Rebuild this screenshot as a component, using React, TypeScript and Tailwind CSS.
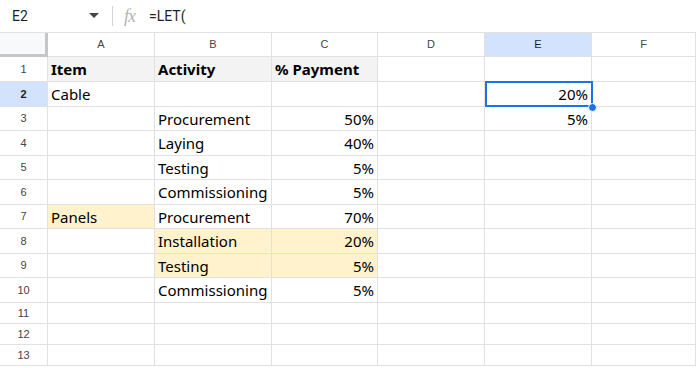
import React from "react";

type Cell = { text?: string; bold?: boolean; right?: boolean; bg?: string };

const cols = [
  { name: "A", w: "w-[107px]" },
  { name: "B", w: "w-[117px]" },
  { name: "C", w: "w-[106px]" },
  { name: "D", w: "w-[107px]" },
  { name: "E", w: "w-[107px]" },
  { name: "F", w: "flex-1" },
];

const HL = "bg-[#fff2cc]";
const HEAD = "bg-[#f3f3f3]";

const rows: { n: number; h: string; cells: Cell[] }[] = [
  {
    n: 1,
    h: "h-[25px]",
    cells: [
      { text: "Item", bold: true, bg: HEAD },
      { text: "Activity", bold: true, bg: HEAD },
      { text: "% Payment", bold: true, bg: HEAD },
    ],
  },
  { n: 2, h: "h-[25px]", cells: [{ text: "Cable" }, {}, {}, {}, { text: "20%", right: true }] },
  { n: 3, h: "h-[24px]", cells: [{}, { text: "Procurement" }, { text: "50%", right: true }, {}, { text: "5%", right: true }] },
  { n: 4, h: "h-[25px]", cells: [{}, { text: "Laying" }, { text: "40%", right: true }] },
  { n: 5, h: "h-[24px]", cells: [{}, { text: "Testing" }, { text: "5%", right: true }] },
  { n: 6, h: "h-[25px]", cells: [{}, { text: "Commissioning" }, { text: "5%", right: true }] },
  { n: 7, h: "h-[24px]", cells: [{ text: "Panels", bg: HL }, { text: "Procurement" }, { text: "70%", right: true }] },
  { n: 8, h: "h-[25px]", cells: [{}, { text: "Installation", bg: HL }, { text: "20%", right: true, bg: HL }] },
  { n: 9, h: "h-[24px]", cells: [{}, { text: "Testing", bg: HL }, { text: "5%", right: true, bg: HL }] },
  { n: 10, h: "h-[25px]", cells: [{}, { text: "Commissioning" }, { text: "5%", right: true }] },
  { n: 11, h: "h-[21px]", cells: [] },
  { n: 12, h: "h-[21px]", cells: [] },
  { n: 13, h: "h-[21px]", cells: [] },
];

export default function App() {
  return (
    <div className="w-[696px] h-[368px] overflow-hidden bg-white font-['Noto_Sans',sans-serif]">
      {/* formula bar */}
      <div className="h-[33px] flex items-center border-b border-[#e1e1e1] font-['Roboto',sans-serif] text-[14px] text-[#1f1f1f]">
        <div className="w-[112px] flex items-center pl-[12px] pr-[12px]">
          <span className="flex-1">E2</span>
          <svg width="10" height="6" viewBox="0 0 10 6" className="mr-[1px]">
            <path d="M0 0h10L5 5z" fill="#444" />
          </svg>
        </div>
        <div className="w-px h-[20px] bg-[#d5d5d5]" />
        <span className="ml-[11px] font-['Liberation_Serif',serif] italic text-[18px] leading-none text-[#b4b4b4] tracking-[-1px]">
          fx
        </span>
        <span className="ml-[14px]">=LET(</span>
      </div>

      {/* column headers */}
      <div className="flex h-[24px] border-b border-[#e1e1e1] font-['Liberation_Sans',sans-serif] text-[11px] text-[#444]">
        <div className="w-[48px] h-[24px] bg-[#f8f9fa] border-r-[3px] border-b-[3px] border-[#c4c7c5] box-border" />
        {cols.map((c) => (
          <div
            key={c.name}
            className={`${c.w} flex items-center justify-center border-r border-[#e1e1e1] ${
              c.name === "E" ? "bg-[#d3e3fd] text-[#1f1f1f]" : ""
            }`}
          >
            {c.name}
          </div>
        ))}
      </div>

      {/* rows */}
      <div className="relative">
        {rows.map((r) => (
          <div key={r.n} className={`flex ${r.h} border-b border-[#e1e1e1]`}>
            <div
              className={`w-[48px] flex items-center justify-center border-r border-[#e1e1e1] font-['Liberation_Sans',sans-serif] text-[11px] ${
                r.n === 2 ? "bg-[#d3e3fd] text-[#1f1f1f] font-bold" : "text-[#444]"
              }`}
            >
              {r.n}
            </div>
            {cols.map((c, i) => {
              const cell = r.cells[i] || {};
              return (
                <div
                  key={c.name}
                  className={`${c.w} flex items-center px-[3px] pt-px border-r border-[#e1e1e1] text-[15px] text-black whitespace-nowrap ${
                    cell.right ? "justify-end" : ""
                  } ${cell.bold ? "font-bold" : ""} ${cell.bg || ""}`}
                >
                  {cell.text}
                </div>
              );
            })}
          </div>
        ))}

        {/* selection on E2 */}
        <div className="absolute left-[485px] top-[24px] w-[108px] h-[26px] border-2 border-[#1a73e8] pointer-events-none" />
        <div className="absolute left-[588px] top-[46px] w-[9px] h-[9px] rounded-full bg-[#1a73e8] border border-white" />
      </div>
    </div>
  );
}
